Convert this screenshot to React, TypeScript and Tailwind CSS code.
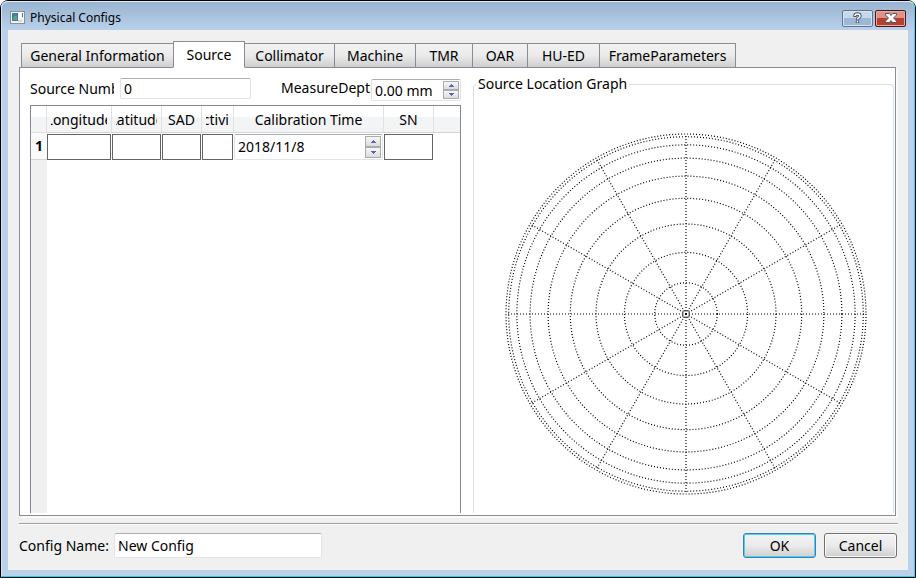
import type { ReactNode } from "react";

const tabs = [
  { name: "General Information", width: "w-[153px]" },
  { name: "Source", width: "w-[72px]" },
  { name: "Collimator", width: "w-[91px]" },
  { name: "Machine", width: "w-[82px]" },
  { name: "TMR", width: "w-[58px]" },
  { name: "OAR", width: "w-[56px]" },
  { name: "HU-ED", width: "w-[73px]" },
  { name: "FrameParameters", width: "w-[137px]" },
];

const columns = [
  { name: "Longitude", width: "w-[65px]" },
  { name: "Latitude", width: "w-[50px]" },
  { name: "SAD", width: "w-[40px]" },
  { name: "Activity", width: "w-[32px]" },
  { name: "Calibration Time", width: "w-[150px]" },
  { name: "SN", width: "w-[50px]" },
];

const RADIUS = 180;
const latitudes = [10, 20, 30, 40, 50, 60, 70, 80, 90];
const meridians = [0, 30, 60, 90, 120, 150, 180, 210, 240, 270, 300, 330];
const rad = (deg: number) => (deg * Math.PI) / 180;

function SourceGraph() {
  return (
    <svg width="362" height="362" viewBox="-181 -181 362 362" role="img" aria-label="Source Location Graph">
      <g fill="none" stroke="#000" strokeWidth="1.2" strokeDasharray="1 2">
        {latitudes.map((a) => (
          <circle key={a} r={RADIUS * Math.sin(rad(a))} />
        ))}
        {meridians.map((a) => (
          <line key={a} x1="0" y1="0" x2={RADIUS * Math.cos(rad(a))} y2={RADIUS * Math.sin(rad(a))} />
        ))}
      </g>
      <rect x="-3" y="-3" width="6" height="6" fill="#fff" stroke="#000" strokeOpacity="0.6" />
      <rect x="-1" y="-1" width="2" height="2" fill="#000" />
    </svg>
  );
}

function SpinButtons() {
  const base =
    "flex flex-1 items-center justify-center border border-[#a9abb0] bg-linear-to-b from-[#f7f7f7] to-[#dcdcdc]";
  return (
    <div className="flex w-4 shrink-0 flex-col">
      <button type="button" aria-label="Increase" className={base}>
        <svg width="5" height="3" viewBox="0 0 5 3"><path d="M2 0h1v1h1v1h1v1H0V2h1V1h1z" fill="#5468b4" /></svg>
      </button>
      <button type="button" aria-label="Decrease" className={base}>
        <svg width="5" height="3" viewBox="0 0 5 3"><path d="M0 0h5v1H4v1H3v1H2V2H1V1H0z" fill="#5468b4" /></svg>
      </button>
    </div>
  );
}

function HeaderText({ children }: { children: ReactNode }) {
  return (
    <div className="flex h-[26px] items-center justify-center px-1 pt-[2px]">
      <span className="flex w-full justify-center overflow-hidden whitespace-nowrap">{children}</span>
    </div>
  );
}

const field = "border border-[#e2e3ea] border-t-[#abadb3] bg-white outline-none rounded-xs";
const pushButton =
  "h-[25px] w-[73px] rounded-[3px] border bg-linear-to-b from-[#f3f3f3] from-0% via-[#ebebeb] via-50% to-[#cfcfcf]";

export default function App() {
  return (
    <div className="flex min-h-screen flex-col bg-white">
      <div className="flex flex-1 flex-col rounded-t-lg border border-black bg-[#b9d1ea]">
        <div className="flex flex-1 flex-col rounded-t-md border border-t-[#dcebf8] border-r-[#35d8f0] border-b-[#20d0e8] border-l-[#cfe4f5] px-[6px] pb-[6px] font-['Noto_Sans','Open_Sans',sans-serif] text-[14px] leading-5 text-black">
          <header className="-mx-[6px] flex h-7 items-center rounded-t-md bg-linear-to-b from-[#99b4d1] to-[#b9d1ea] pr-2 pl-2">
            <svg width="15" height="13" viewBox="0 0 15 13" className="mt-[2px]" aria-hidden="true">
              <rect x=".5" y=".5" width="14" height="12" fill="#f4f4f4" stroke="#8c9096" />
              <rect x="2" y="2" width="6" height="8" fill="#4577a6" />
              <path d="M3 3h4v6H3z" fill="#3d8b87" />
              <path d="M4 5h3v4H3z" fill="#58a582" />
              <rect x="9" y="2" width="2" height="5" fill="#fff" />
              <rect x="12" y="2" width="1" height="4" fill="#3f7dae" />
              <rect x="8" y="9" width="4" height="2" fill="#d5d5d5" />
            </svg>
            <h1 className="ml-[5px] flex-1 pt-1 text-[12px]">Physical Configs</h1>
            <div className="flex gap-[2px] pt-1">
              <button type="button" aria-label="Help" className="flex h-[17px] w-[31px] items-center justify-center rounded-xs border border-[#5c7591] bg-linear-to-b from-[#c6d8eb] from-50% to-[#9db8d5] to-50% shadow-[inset_0_0_0_1px_#d5e3f2]">
                <svg width="9" height="12" viewBox="0 0 9 12" fill="none">
                  <path d="M2 5V3.500Q2.300 2 4.500 2T7 4Q7 5 5.500 5.900Q4.500 6.500 4.500 8M4.500 8.500V11" stroke="#4b5563" strokeWidth="3.4" />
                  <path d="M2 4V3.500Q2.300 2 4.500 2T7 4Q7 5 5.500 5.900Q4.500 6.500 4.500 7.500M4.500 9V10.500" stroke="#fff" strokeWidth="1.500" />
                </svg>
              </button>
              <button type="button" aria-label="Close" className="flex h-[17px] w-[31px] items-center justify-center rounded-xs border border-[#4b1620] bg-linear-to-b from-[#dd9388] from-50% to-[#b8402c] to-50% shadow-[inset_0_0_0_1px_#e8a99f]">
                <svg width="12" height="10" viewBox="0 0 12 10">
                  <path d="M.5.5h4L6 2.5 7.500.5h4v1.500L8.500 5l3 3v1.500h-4L6 7.500 4.500 9.500h-4V8l3-3-3-3z" fill="#fff" stroke="#535666" />
                </svg>
              </button>
            </div>
          </header>

          <main className="flex flex-1 flex-col bg-[#f0f0f0] pt-[11px] pr-3 pl-[11px]">
            <div role="tablist" className="relative z-10 -mb-px flex items-end pl-[2px]">
              {tabs.map((tab) => {
                const active = tab.name === "Source";
                return (
                  <button
                    key={tab.name}
                    type="button"
                    role="tab"
                    aria-selected={active}
                    className={`${tab.width} shrink-0 border border-[#898c95] whitespace-nowrap not-first:-ml-px ${
                      active
                        ? "z-10 h-[27px] border-b-white bg-white"
                        : "h-[25px] bg-linear-to-b from-[#f2f2f2] via-[#ebebeb] via-50% to-[#cfcfcf]"
                    }`}
                  >
                    {tab.name}
                  </button>
                );
              })}
            </div>

            <section role="tabpanel" className="flex flex-1 gap-3 border border-[#898c95] bg-white pt-[10px] pr-px pb-[2px] pl-[10px] shadow-[2px_2px_0_#fafafa]">
              <div className="flex w-[431px] shrink-0 flex-col">
                <div className="flex h-[27px] items-start">
                  <label htmlFor="source-number" className="mt-px w-[84px] shrink-0 overflow-hidden whitespace-nowrap">
                    Source Number
                  </label>
                  <input id="source-number" defaultValue="0" className={`${field} ml-[6px] h-[21px] w-[131px] px-[3px]`} />
                  <label htmlFor="measure-depth" className="ml-auto w-[90px] shrink-0 overflow-hidden whitespace-nowrap">
                    MeasureDepth
                  </label>
                  <div className={`${field} mt-px flex h-[22px] w-[90px] p-px`}>
                    <input id="measure-depth" defaultValue="0.00 mm" className="min-w-0 flex-1 bg-transparent pt-[2px] pl-[2px] outline-none" />
                    <SpinButtons />
                  </div>
                </div>

                <div className="flex flex-1 flex-col border-x border-t border-[#828790] bg-linear-to-r from-[#f0f0f0] from-[16px] to-white to-[16px]">
                  <table className="w-full table-fixed border-separate border-spacing-0 bg-white">
                    <thead className="bg-linear-to-b from-white from-40% to-[#f3f4f6] to-40%">
                      <tr>
                        <th className="w-4 border-r border-b border-[#dfe1e5] p-0" aria-label="Row" />
                        {columns.map((c) => (
                          <th key={c.name} scope="col" className={`${c.width} border-r border-b border-[#dfe1e5] border-b-[#d5d5d5] p-0 font-normal`}>
                            <HeaderText>{c.name}</HeaderText>
                          </th>
                        ))}
                        <td className="border-b border-[#d5d5d5] p-0" />
                      </tr>
                    </thead>
                    <tbody>
                      <tr>
                        <th scope="row" className="h-[27px] border-b border-[#d5d5d5] bg-[#fafafa] p-0 font-bold">1</th>
                        {columns.map((c) => (
                          <td key={c.name} className="p-0 pr-px">
                            {c.name === "Calibration Time" ? (
                              <div className={`${field} flex h-[26px] p-px`}>
                                <input aria-label={c.name} defaultValue="2018/11/8" className="min-w-0 flex-1 bg-transparent pl-[2px] outline-none" />
                                <SpinButtons />
                              </div>
                            ) : (
                              <input aria-label={c.name} className="block h-[26px] w-full border border-[#646464] bg-white px-1 outline-none" />
                            )}
                          </td>
                        ))}
                        <td className="p-0" />
                      </tr>
                    </tbody>
                  </table>
                </div>
              </div>

              <fieldset className="-mt-1 min-w-0 flex-1 rounded-t border border-b-0 border-[#d5dfe5]">
                <legend className="ml-[2px] px-[2px]">Source Location Graph</legend>
                <div className="flex justify-center pt-[39px] pb-4 pl-1">
                  <SourceGraph />
                </div>
              </fieldset>
            </section>

            <footer className="mt-[7px] -mr-[2px] flex h-[47px] items-start border-t border-[#a0a0a0] pt-[9px] shadow-[inset_0_1px_0_#fff]">
              <label htmlFor="config-name" className="w-[95px] pt-[3px]">Config Name:</label>
              <input id="config-name" defaultValue="New Config" className={`${field} h-[25px] w-[208px] px-[3px]`} />
              <div className="ml-auto flex gap-2 pr-px">
                <button type="button" className={`${pushButton} border-[#3c7fb1] shadow-[inset_0_0_0_1px_#48d1f4]`}>OK</button>
                <button type="button" className={`${pushButton} border-[#707070] shadow-[inset_0_0_0_1px_#fafafa]`}>Cancel</button>
              </div>
            </footer>
          </main>
        </div>
      </div>
    </div>
  );
}
